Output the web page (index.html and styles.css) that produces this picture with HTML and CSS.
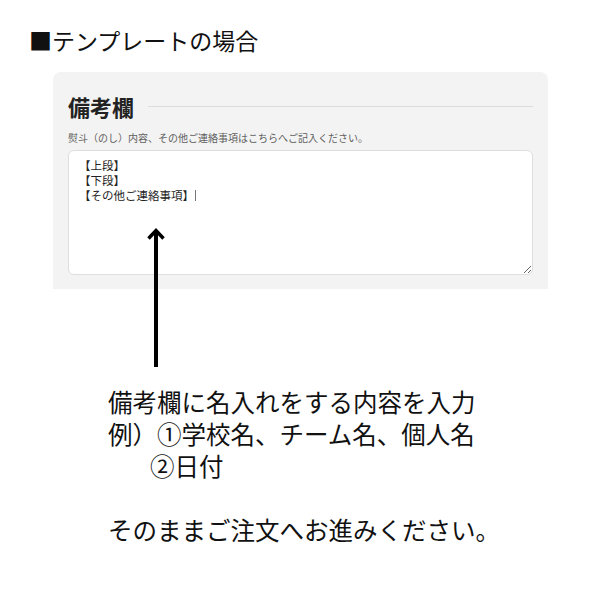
FILE: index.html
```html
<!DOCTYPE html>
<html lang="ja">
<head>
    <meta charset="UTF-8">
    <meta name="viewport" content="width=device-width, initial-scale=1.0">
    <title>テンプレートの場合</title>
    <link rel="stylesheet" href="styles.css">
</head>
<body>
    <div class="page">
        <h1 class="page-title">■テンプレートの場合</h1>

        <div class="sample">
            <div class="remarks">
                <div class="remarks-head">
                    <h2>備考欄</h2>
                    <span class="remarks-rule"></span>
                </div>
                <p class="remarks-note">熨斗（のし）内容、その他ご連絡事項はこちらへご記入ください。</p>
                <div class="remarks-box">
                    <div>【上段】</div>
                    <div>【下段】</div>
                    <div>【その他ご連絡事項】<span class="caret"></span></div>
                </div>
            </div>

            <!-- arrow pointing up into the text box -->
            <svg class="pointer" width="20" height="142" viewBox="0 0 20 142">
                <path d="M10 3 V140" stroke="#000" stroke-width="4" fill="none"/>
                <path d="M2.5 11.5 L10 3.5 L17.5 11.5" stroke="#000" stroke-width="3.5" fill="none"/>
            </svg>
        </div>

        <div class="guide">
            <p>備考欄に名入れをする内容を入力</p>
            <p>例）①学校名、チーム名、個人名</p>
            <p class="indent">②日付</p>
            <p class="gap">そのままご注文へお進みください。</p>
        </div>
    </div>
</body>
</html>
```

FILE: styles.css
```css
* {
    box-sizing: border-box;
}
body {
    margin: 0;
    background-color: #fff;
    color: #111;
    font-family: "Noto Sans CJK JP", "Noto Sans", sans-serif;
}
.page {
    padding-top: 24px;
}
.page-title {
    margin: 0;
    padding-left: 29px;
    font-size: 23px;
    font-weight: normal;
    line-height: 32px;
}
.sample {
    position: relative;
    margin-top: 16px;
}
.remarks {
    margin-left: 53px;
    width: 495px;
    padding: 19px 15px 14px;
    background-color: #f3f3f3;
    border-radius: 8px 8px 0 0;
}
.remarks-head {
    display: flex;
    align-items: center;
    gap: 14px;
}
.remarks-head h2 {
    margin: 0;
    font-size: 22px;
    line-height: 30px;
    font-weight: bold;
    color: #222;
}
.remarks-rule {
    flex: 1;
    height: 1px;
    background-color: #dcdcdc;
}
.remarks-note {
    margin: 10px 0 0;
    font-size: 10px;
    line-height: 14px;
    color: #5e5e5e;
}
.remarks-box {
    margin-top: 5px;
    height: 125px;
    padding: 7px 10px;
    background-color: #fff;
    border: 1px solid #dedede;
    border-radius: 6px;
    font-size: 11.5px;
    line-height: 15px;
    color: #222;
    resize: both;
    overflow: auto;
}
.remarks-box .caret {
    display: inline-block;
    width: 1px;
    height: 11px;
    margin-left: 1px;
    vertical-align: -1px;
    background-color: #777;
}
.pointer {
    position: absolute;
    left: 146px;
    top: 155px;
}
.guide {
    margin-top: 97px;
    padding-left: 108px;
    font-size: 24.5px;
    line-height: 32px;
}
.guide p {
    margin: 0;
}
.guide .indent {
    padding-left: 42px;
}
.guide .gap {
    margin-top: 32px;
}
```
